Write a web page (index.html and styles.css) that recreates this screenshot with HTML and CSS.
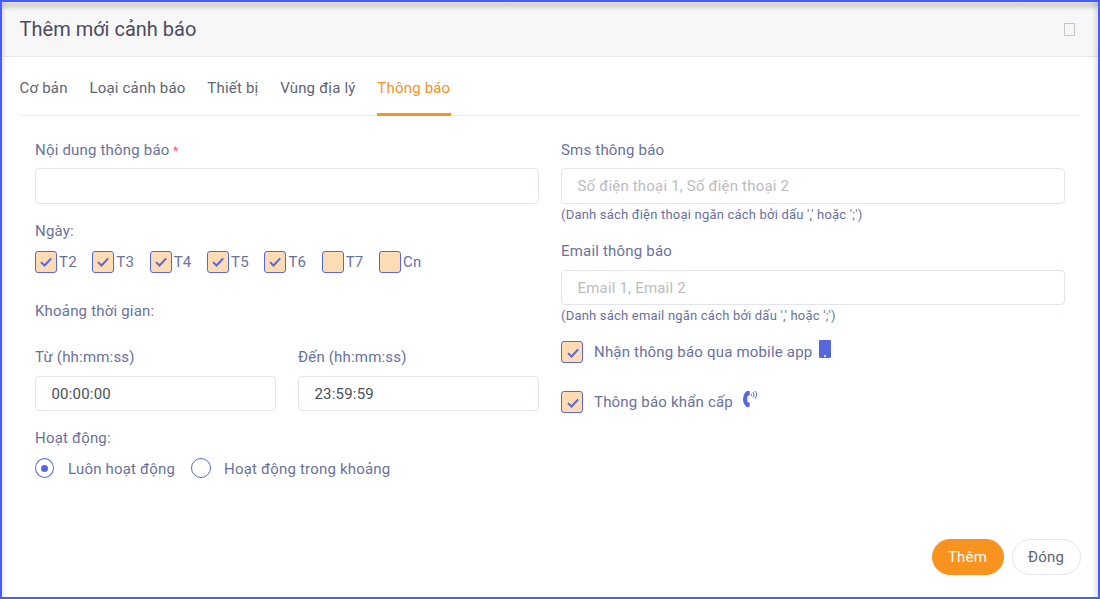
FILE: index.html
```html
<!DOCTYPE html>
<html lang="vi">
<head>
<meta charset="utf-8">
<title>Thêm mới cảnh báo</title>
<link rel="stylesheet" href="styles.css">
</head>
<body>
<div class="modal">
  <header class="modal-header">
    <h1 class="modal-title">Thêm mới cảnh báo</h1>
    <span class="close" role="button" aria-label="Đóng"></span>
  </header>
  <nav class="tabs">
    <a class="tab">Cơ bản</a>
    <a class="tab">Loại cảnh báo</a>
    <a class="tab">Thiết bị</a>
    <a class="tab">Vùng địa lý</a>
    <a class="tab active">Thông báo</a>
  </nav>
  <main class="columns">
    <section class="column">
      <div class="label">Nội dung thông báo <span class="required">*</span></div>
      <div class="input tall"></div>
      <div class="label days-label">Ngày:</div>
      <div class="days">
        <label class="day"><span class="box"><svg class="check" viewBox="0 0 12 10"><path d="M1 5.1 4.5 8.5 11.2 1.4"/></svg></span>T2</label>
        <label class="day"><span class="box"><svg class="check" viewBox="0 0 12 10"><path d="M1 5.1 4.5 8.5 11.2 1.4"/></svg></span>T3</label>
        <label class="day"><span class="box"><svg class="check" viewBox="0 0 12 10"><path d="M1 5.1 4.5 8.5 11.2 1.4"/></svg></span>T4</label>
        <label class="day"><span class="box"><svg class="check" viewBox="0 0 12 10"><path d="M1 5.1 4.5 8.5 11.2 1.4"/></svg></span>T5</label>
        <label class="day"><span class="box"><svg class="check" viewBox="0 0 12 10"><path d="M1 5.1 4.5 8.5 11.2 1.4"/></svg></span>T6</label>
        <label class="day"><span class="box"></span>T7</label>
        <label class="day"><span class="box"></span>Cn</label>
      </div>
      <div class="label range-label">Khoảng thời gian:</div>
      <div class="times">
        <div>
          <div class="label">Từ (hh:mm:ss)</div>
          <div class="input">00:00:00</div>
        </div>
        <div>
          <div class="label">Đến (hh:mm:ss)</div>
          <div class="input">23:59:59</div>
        </div>
      </div>
      <div class="label active-label">Hoạt động:</div>
      <div class="radios">
        <label class="radio-item"><span class="radio selected"></span><span class="radio-text">Luôn hoạt động</span></label>
        <label class="radio-item"><span class="radio"></span><span class="radio-text">Hoạt động trong khoảng</span></label>
      </div>
    </section>
    <section class="column">
      <div class="label">Sms thông báo</div>
      <div class="input tall placeholder">Số điện thoại 1, Số điện thoại 2</div>
      <div class="hint">(Danh sách điện thoại ngăn cách bởi dấu ',' hoặc ';')</div>
      <div class="label email-label">Email thông báo</div>
      <div class="input placeholder">Email 1, Email 2</div>
      <div class="hint">(Danh sách email ngăn cách bởi dấu ',' hoặc ';')</div>
      <label class="option first"><span class="box"><svg class="check" viewBox="0 0 12 10"><path d="M1 5.1 4.5 8.5 11.2 1.4"/></svg></span><span class="option-text">Nhận thông báo qua mobile app</span><svg class="icon mobile" viewBox="0 0 12 18"><path fill-rule="evenodd" d="M1.3 0H10.700Q12 0 12 1.300V16.700Q12 18 10.700 18H1.300Q0 18 0 16.700V1.300Q0 0 1.300 0ZM6 14.900a1 1 0 1 0 0 2 1 1 0 1 0 0-2Z"/></svg></label>
      <label class="option"><span class="box"><svg class="check" viewBox="0 0 12 10"><path d="M1 5.1 4.5 8.500 11.200 1.400"/></svg></span><span class="option-text">Thông báo khẩn cấp</span><svg class="icon phone" viewBox="0 0 15 18"><path d="M4.300.9 6.100 1.100Q6.500 1.200 6.600 1.700L6.900 4.400Q6.900 4.900 6.500 5.100L4.600 6.100Q3.700 9.200 4.600 12L6.500 12.900Q7 13.200 6.900 13.700L6.500 16.400Q6.400 17 5.800 17.100L4.600 17.200Q3.800 17.200 3.200 16.600 0 13.500 0 9.200 0 4.700 3 1.500 3.500.9 4.300.9Z"/><path class="wave" d="M8.300 3.700q.9 1.100 0 2.200M10 2.300q2.200 2.500 0 5M11.900.9q3.500 3.900 0 7.800"/></svg></label>
    </section>
  </main>
  <footer class="actions">
    <button class="button primary">Thêm</button>
    <button class="button">Đóng</button>
  </footer>
</div>
</body>
</html>
```
FILE: styles.css
```css
* { box-sizing: border-box; }
body {
  margin: 0;
  font-family: Roboto, "Liberation Sans", sans-serif;
  font-size: 15px;
  line-height: 20px;
  letter-spacing: 0.19px;
  color: #6a719d;
}
.modal {
  position: relative;
  display: flex;
  flex-direction: column;
  width: 1100px;
  height: 599px;
  border: 2px solid #455cff;
  background: #fff;
}
/* soft inner edge of the frame */
.modal::after {
  content: "";
  position: absolute;
  inset: 0;
  pointer-events: none;
  background:
    linear-gradient(to bottom, #00000018, #00000026 3px, #00000012 6px, #0000 9px),
    linear-gradient(to right, #00000014, #0000 5px),
    linear-gradient(to left, #0000001c, #0000 6px);
}
.modal-header {
  display: flex;
  justify-content: space-between;
  align-items: center;
  height: 55px;
  padding: 0 23.500px 0 17.600px;
  border-bottom: 1px solid #e8e8ea;
  background: #f7f7f8;
}
.modal-title {
  margin: 0;
  font-size: 20px;
  font-weight: 400;
  line-height: 30px;
  letter-spacing: 0;
  color: #4c4a5f;
}
.close { width: 11px; height: 13px; border: 1px solid #c4c4ce; }
.tabs {
  display: flex;
  gap: 21.8px;
  height: 59px;
  margin: 0 17px 0 17.600px;
  border-bottom: 1px solid #ebebee;
}
.tab { height: 59px; padding-top: 21px; color: #606475; }
.tab.active { min-width: 74px; color: #f7931e; border-bottom: 3px solid #f7931e; }
.columns {
  display: grid;
  grid-template-columns: 504px 504px;
  gap: 22px;
  margin: 24px 0 0 33px;
}
.label { height: 20px; }
.required { margin-left: -0.5px; font-size: 12px; color: #fd5c8e; }
.input {
  display: flex;
  align-items: center;
  height: 35px;
  margin-top: 9px;
  padding: 0 15.5px;
  border: 1px solid #e2e5ec;
  border-radius: 4px;
  color: #495057;
}
.input.tall { height: 36px; margin-top: 8px; }
.input.placeholder { color: #bcbcc0; }
.days-label { margin-top: 17px; }
.days { display: grid; grid-template-columns: repeat(7, 57.35px); margin-top: 10px; }
.day { display: flex; align-items: center; gap: 2px; height: 22px; }
.box {
  display: flex;
  flex: none;
  align-items: center;
  justify-content: center;
  width: 22px;
  height: 22px;
  border: 1px solid #5867dd;
  border-radius: 3px;
  background: #fddbb3;
}
.check { width: 12px; height: 10px; fill: none; stroke: #5867dd; stroke-width: 2; }
.range-label { margin-top: 28px; }
.times { display: grid; grid-template-columns: 241px 241px; gap: 22px; margin-top: 26px; }
.active-label { margin-top: 17px; }
.radios { display: flex; gap: 16px; margin-top: 10px; }
.radio-item { display: flex; align-items: center; gap: 13px; }
.radio-item:first-child { gap: 14px; }
.radio-text { padding-top: 1px; line-height: 21px; margin-bottom: -2px; }
.radio {
  display: flex;
  align-items: center;
  justify-content: center;
  width: 20px;
  height: 20px;
  border: 1px solid #5867dd;
  border-radius: 50%;
}
.radio.selected { width: 19px; }
.radio.selected::after { content: ""; width: 7px; height: 7px; border-radius: 50%; background: #5867dd; }
.hint { height: 20px; padding-top: 1px; font-size: 13px; letter-spacing: 0.2px; }
.email-label { margin-top: 17px; }
.option { display: flex; align-items: center; height: 22px; margin-top: 28px; }
.option.first { margin-top: 16px; }
.option .box { padding: 1px 0 0 1px; }
.option-text { margin-left: 11px; }
.icon { align-self: flex-start; fill: #5867dd; }
.mobile { width: 12px; height: 18px; margin: -1px 0 0 6.5px; }
.phone { width: 15px; height: 18px; margin: -1px 0 0 10px; }
.wave { fill: none; stroke: #5867dd; stroke-width: 1; }
.actions { display: flex; justify-content: flex-end; gap: 8px; margin: auto 17px 22px 0; }
.button {
  min-width: 69px;
  height: 36px;
  padding: 0 15px 0 14px;
  border: 1px solid #e2e5ec;
  border-radius: 18px;
  background: #fff;
  font: inherit;
  letter-spacing: inherit;
  color: #606475;
}
.button.primary { min-width: 72px; border-color: #f7931e; background: #f7931e; color: #fff; }
```
